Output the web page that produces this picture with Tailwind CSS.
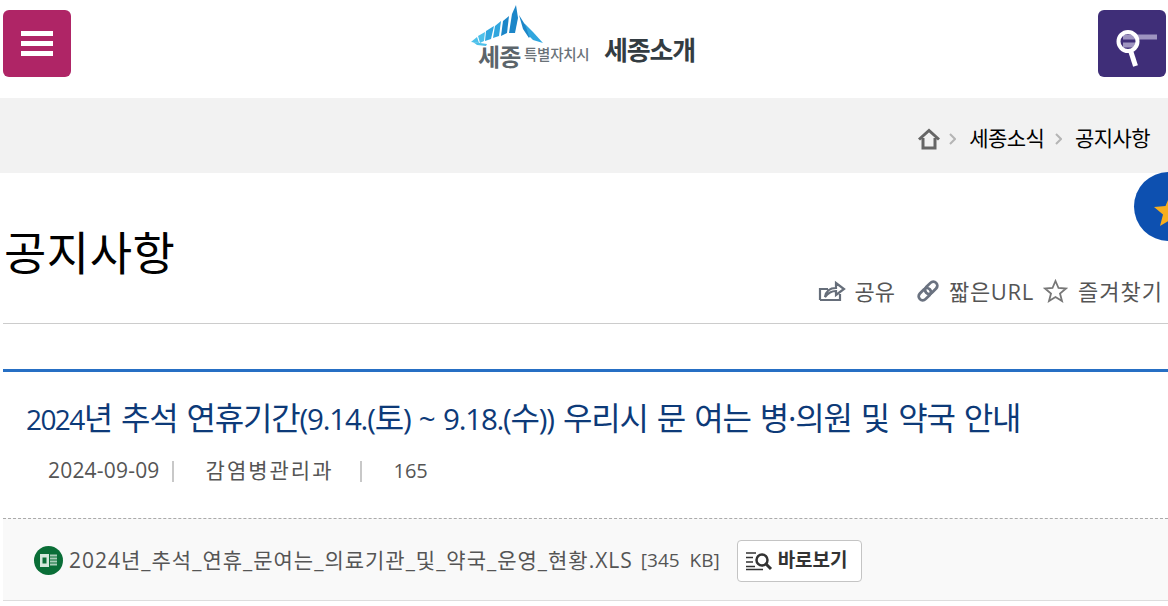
<!DOCTYPE html>
<html lang="ko">
<head>
  <meta charset="UTF-8" />
  <meta name="viewport" content="width=device-width, initial-scale=1.0"/>
  <title>공지사항</title>
  <script src="https://cdn.jsdelivr.net/npm/@tailwindcss/browser@4"></script>
</head>
<body class="relative h-[606px] overflow-hidden bg-white font-['Open_Sans','Noto_Sans_CJK_KR',sans-serif]">
  <!-- top bar -->
  <header class="flex h-[98px] items-start justify-between pl-[3px] pr-[2px] pt-[10px]">
    <button class="flex h-[67px] w-[68px] flex-col items-center justify-center gap-[5px] rounded-md bg-[#af2566]">
      <span class="h-[5px] w-[32px] bg-white"></span>
      <span class="h-[5px] w-[32px] bg-white"></span>
      <span class="h-[5px] w-[32px] bg-white"></span>
    </button>

    <div class="mr-[3px] mt-[-10px] flex items-end">
      <div class="relative h-[75px] w-[119px]">
        <svg class="absolute left-0 top-0" width="75" height="48" viewBox="0 0 75 48">
          <g fill="#1c86c8">
            <polygon points="45,5 47,18 44,33 38,33 41,14"/>
            <polygon points="38,16 36,33 30,36 32,21"/>
            <polygon points="48,15 52,29 58,38 61,33 53,23"/>
          </g>
          <g fill="#30a6de">
            <polygon points="30,21 28,36 22,38 24,26"/>
            <polygon points="23,26 20,39 14,41 15,31"/>
            <polygon points="54,24 62,32 72,43 62,40 58,36"/>
          </g>
          <g fill="#4dc0ea">
            <polygon points="14,32 13,41 9,43 7,36"/>
            <polygon points="6,37 8,43 0,42"/>
            <polygon points="2,42 16,44 15,46 6,45"/>
          </g>
        </svg>
        <span class="absolute left-[7px] top-[42px] text-[24px] font-semibold leading-[30px] tracking-[-1px] text-[#5c656b]">세종</span>
        <span class="absolute left-[53px] top-[46px] text-[14.5px] font-medium leading-[18px] tracking-[-0.3px] text-[#6a7278]">특별자치시</span>
      </div>
      <span class="mb-[10px] ml-[14px] text-[26px] font-bold leading-[30px] tracking-[-1.2px] text-[#333c42]">세종소개</span>
    </div>

    <button class="flex h-[67px] w-[68px] items-center justify-center rounded-md bg-[#3f2e78]">
      <svg class="shrink-0" width="50" height="48" viewBox="0 0 50 48">
        <rect x="16" y="14.500" width="34" height="5" fill="#9e94c0"/>
        <rect x="16" y="22.500" width="15" height="5" fill="#9e94c0"/>
        <circle cx="21" cy="21.500" r="9.500" fill="none" stroke="#fff" stroke-width="4"/>
        <path d="M24 32 L28.500 46" stroke="#fff" stroke-width="5" fill="none"/>
      </svg>
    </button>
  </header>

  <!-- breadcrumb -->
  <nav class="flex h-[75px] items-center justify-end bg-[#f2f2f2] pr-[18px] pt-[6px] text-[21px] tracking-[-0.6px] text-black">
    <svg width="24" height="22" viewBox="0 0 24 22" fill="none" stroke="#666" stroke-width="3">
      <path d="M2 11.500 L12 2.500 L22 11.500 M6 10 V20 H18 V10"/>
    </svg>
    <svg class="ml-[8px] mr-[13px]" width="7" height="12" viewBox="0 0 7 12" fill="none" stroke="#b5b5b5" stroke-width="2"><path d="M1 1 L6 6 L1 11"/></svg>
    <span>세종소식</span>
    <svg class="ml-[11px] mr-[13px]" width="7" height="12" viewBox="0 0 7 12" fill="none" stroke="#b5b5b5" stroke-width="2"><path d="M1 1 L6 6 L1 11"/></svg>
    <span>공지사항</span>
  </nav>

  <!-- floating favourite -->
  <div class="absolute left-[1134px] top-[172px] h-[69px] w-[69px] rounded-full bg-[#0d50b0]">
    <svg class="absolute left-[20px] top-[23px]" width="32" height="32" viewBox="0 0 32 32">
      <polygon points="16,0 20.500,11 32,12 23,19.500 26,31 16,25 6,31 9,19.500 0,12 11.500,11" fill="#f7ae1e"/>
    </svg>
  </div>

  <!-- page title -->
  <section class="ml-[3px] flex h-[151px] items-end justify-between border-b border-[#cccccc] pb-[17px] pr-[5px]">
    <h1 class="mb-[24px] ml-[1px] text-[46px] font-normal leading-[60px] tracking-[0.5px] text-black">공지사항</h1>
    <div class="flex items-center text-[22px] leading-[30px] text-[#555]">
      <svg width="28" height="22" viewBox="0 0 28 22" fill="none" stroke="#666e7a" stroke-width="2.200">
        <path d="M2 20 V9 H10 M2 20 H22 V14 M7 17 C8 11 12 8 18 8 V3 L26 9 L18 15 V11 C13 11 10 13 7 17Z"/>
      </svg>
      <span class="ml-[8px]">공유</span>
      <svg class="ml-[21px]" width="24" height="24" viewBox="0 0 24 24" fill="none" stroke="#6a7280" stroke-width="2.800">
        <g transform="rotate(-45 12 12)">
          <rect x="0.500" y="8" width="14" height="8" rx="4"/>
          <rect x="9.500" y="8" width="14" height="8" rx="4"/>
        </g>
      </svg>
      <span class="ml-[9px] tracking-[0.7px]">짧은URL</span>
      <svg class="ml-[9px]" width="25" height="24" viewBox="0 0 25 24" fill="none" stroke="#777" stroke-width="1.800">
        <polygon points="12.500,2 15.500,9 23,9.500 17,14.500 19,22 12.500,18 6,22 8,14.500 2,9.500 9.500,9"/>
      </svg>
      <span class="ml-[10px] tracking-[1px]">즐겨찾기</span>
    </div>
  </section>

  <!-- article head -->
  <section class="ml-[3px] mt-[45px] border-t-[3px] border-[#266fc4]">
    <h2 class="ml-[23px] mt-[23px] text-[32px] font-normal leading-[46px] tracking-[-1.2px] text-[#0d3a78] [word-spacing:2px]"><span class="text-[28px] tracking-[-1.6px]">2024</span>년 추석 연휴기간<span class="text-[29.5px]">(9.14.(</span>토<span class="text-[29.5px]">) ~ 9.18.(</span>수<span class="text-[29.5px]">))</span> 우리시 문 여는 병·의원 및 약국 안내</h2>
    <div class="ml-[45px] mt-[15px] flex h-[28px] items-center text-[21px] text-[#555]">
      <span class="pr-[12px] tracking-[0.2px]">2024-09-09</span>
      <span class="h-[21px] w-[2px] bg-[#c8c8c8]"></span>
      <span class="pl-[32px] pr-[26px] tracking-[2px]">감염병관리과</span>
      <span class="h-[21px] w-[2px] bg-[#c8c8c8]"></span>
      <span class="pl-[32px] text-[20px]">165</span>
    </div>
  </section>

  <!-- attachment -->
  <div class="ml-[3px] mt-[33px] border-b border-[#dddddd]">
    <section class="flex h-[82px] items-center border-t border-dashed border-[#aaaaaa] bg-[#f9f9f9] pl-[31px] pt-[2px] text-[21px] text-[#555]">
      <svg width="29" height="29" viewBox="0 0 29 29">
        <circle cx="14.500" cy="14.500" r="14.500" fill="#0a6e37"/>
        <rect x="6" y="8" width="9" height="13" fill="#d5e8dc"/>
        <rect x="8.500" y="11.500" width="4" height="6" fill="#0a6e37"/>
        <path d="M16 9.500 H23 M16 12.500 H23 M16 15.500 H23 M16 18.500 H23" stroke="#a9cdb8" stroke-width="2"/>
      </svg>
      <span class="ml-[6px] tracking-[1px]">2024년_추석_연휴_문여는_의료기관_및_약국_운영_현황.XLS</span>
      <span class="ml-[8px] text-[19px]">[345&nbsp; KB]</span>
      <button class="ml-[17px] flex h-[42px] w-[125px] items-center justify-start gap-[5px] rounded-[4px] border border-[#c4c4c4] bg-white pl-[7px] text-[19px] font-bold text-[#333]">
        <svg width="28" height="20" viewBox="0 0 28 20" fill="none" stroke="#333">
          <path d="M1 2 H11 M1 6.500 H8 M1 11 H8 M1 15.500 H10 M1 18.500 H18" stroke-width="1.500"/>
          <circle cx="17" cy="9" r="5.500" stroke-width="2.500"/>
          <path d="M21 13 L26 18" stroke-width="3"/>
        </svg>
        <span>바로보기</span>
      </button>
    </section>
  </div>
</body>
</html>
